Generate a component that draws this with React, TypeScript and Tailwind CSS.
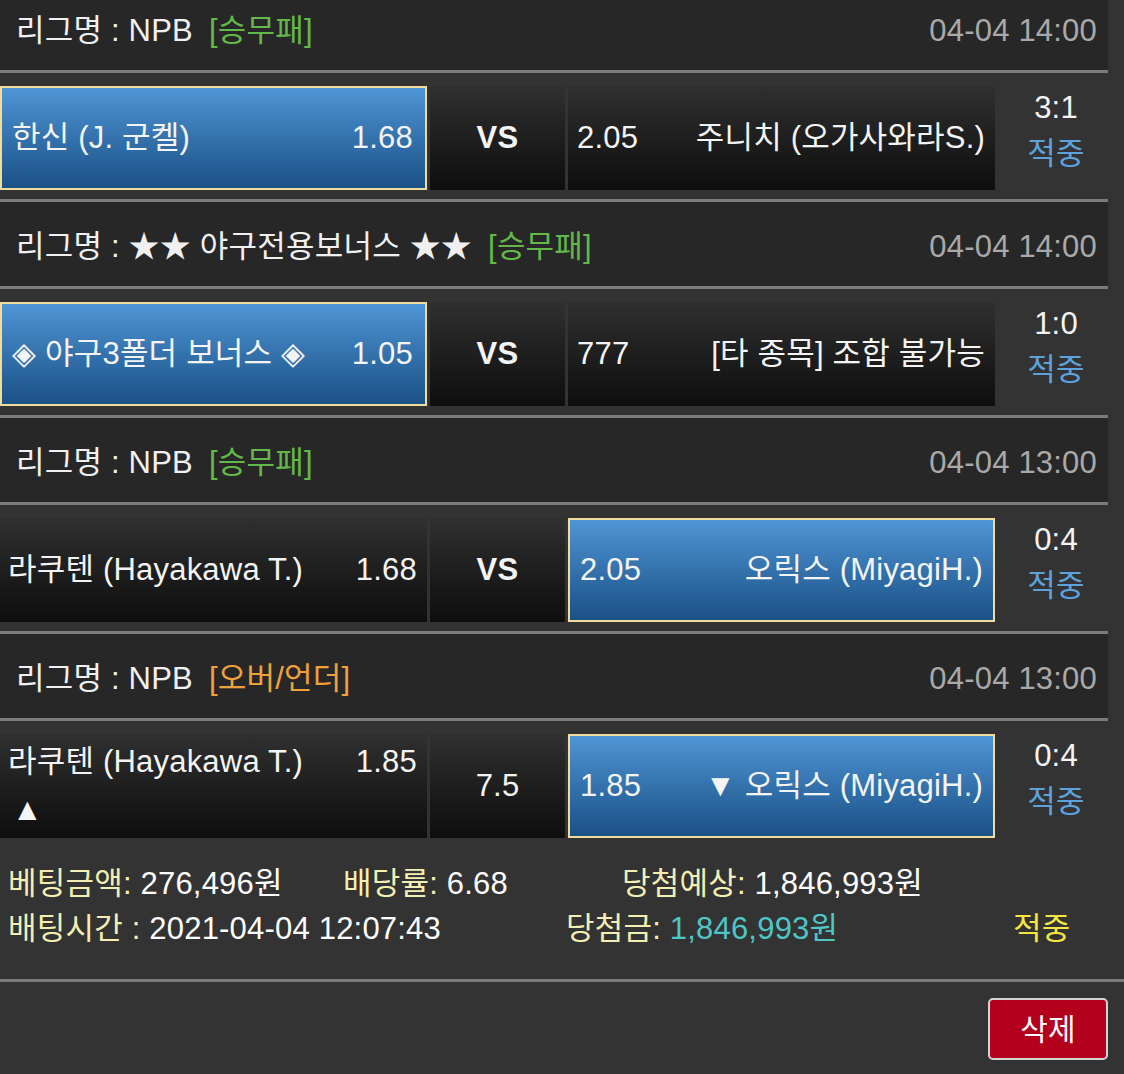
import React from 'react';
import clsx from 'clsx';

interface Game {
  league: string;
  tag: string;
  tagClass: string;
  date: string;
  home: string;
  homeOdds: string;
  homeSub?: string;
  mid: string;
  awayOdds: string;
  away: string;
  pick: 'home' | 'away';
  score: string;
}

const games: Game[] = [
  {
    league: 'NPB',
    tag: '[승무패]',
    tagClass: 'text-[#62b849]',
    date: '04-04 14:00',
    home: '한신 (J. 군켈)',
    homeOdds: '1.68',
    mid: 'VS',
    awayOdds: '2.05',
    away: '주니치 (오가사와라S.)',
    pick: 'home',
    score: '3:1',
  },
  {
    league: '★★ 야구전용보너스 ★★',
    tag: '[승무패]',
    tagClass: 'text-[#62b849]',
    date: '04-04 14:00',
    home: '◈ 야구3폴더 보너스 ◈',
    homeOdds: '1.05',
    mid: 'VS',
    awayOdds: '777',
    away: '[타 종목] 조합 불가능',
    pick: 'home',
    score: '1:0',
  },
  {
    league: 'NPB',
    tag: '[승무패]',
    tagClass: 'text-[#62b849]',
    date: '04-04 13:00',
    home: '라쿠텐 (Hayakawa T.)',
    homeOdds: '1.68',
    mid: 'VS',
    awayOdds: '2.05',
    away: '오릭스 (MiyagiH.)',
    pick: 'away',
    score: '0:4',
  },
  {
    league: 'NPB',
    tag: '[오버/언더]',
    tagClass: 'text-[#f0a13c]',
    date: '04-04 13:00',
    home: '라쿠텐 (Hayakawa T.)',
    homeOdds: '1.85',
    homeSub: '▲',
    mid: '7.5',
    awayOdds: '1.85',
    away: '▼ 오릭스 (MiyagiH.)',
    pick: 'away',
    score: '0:4',
  },
];

const dark = 'bg-linear-to-b from-[#303030] to-[#0e0e0e]';
const blue = 'bg-linear-to-b from-[#4f95d5] to-[#1a5186] border-2 border-[#f0dc9c]';

const GameBlock: React.FC<{ game: Game }> = ({ game }) => {
  const homeSel = game.pick === 'home';
  const awaySel = game.pick === 'away';

  return (
    <div>
      <div className="w-[1108px] border-y-[3px] border-[#7b7b7b] bg-[#272727] h-[90px] flex items-center justify-between pl-4 pr-[11px] pt-[7px]">
        <div className="text-[#f0f0f0]">
          리그명 : {game.league}
          <span className={clsx('ml-4', game.tagClass)}>{game.tag}</span>
        </div>
        <div className="text-[#a9a9a9]">{game.date}</div>
      </div>

      <div className="mt-[13px] mb-[9px] flex h-[104px] w-[1108px] gap-[3px] text-[#f4f4f4]">
        <div
          className={clsx(
            'w-[427px] flex flex-col justify-center',
            homeSel ? blue + ' pl-[10px] pr-[12px]' : dark + ' pl-2 pr-[10px]'
          )}
        >
          <div className="flex items-center justify-between leading-[48px]">
            <span>{game.home}</span>
            <span>{game.homeOdds}</span>
          </div>
          {game.homeSub && <div className="leading-[48px] pl-1">{game.homeSub}</div>}
        </div>

        <div className={clsx('w-[135px] flex items-center justify-center', dark)}>
          <span className={game.mid === 'VS' ? 'font-bold' : ''}>{game.mid}</span>
        </div>

        <div
          className={clsx(
            'w-[427px] flex items-center justify-between',
            awaySel ? blue + ' px-[10px]' : dark + ' pl-[9px] pr-[10px]'
          )}
        >
          <span>{game.awayOdds}</span>
          <span>{game.away}</span>
        </div>

        <div className="flex-1 flex flex-col items-center justify-center pl-[6px] pb-[14px] leading-[46px]">
          <span>{game.score}</span>
          <span className="text-[#5ea2dc]">적중</span>
        </div>
      </div>
    </div>
  );
};

export default function App() {
  return (
    <div className="min-h-screen overflow-hidden bg-[#333333] text-[31px] tracking-[0.2px] font-['Liberation_Sans','Noto_Sans_CJK_KR',sans-serif]">
      <div className="-mt-[17px]">
        {games.map((g, i) => (
          <GameBlock key={i} game={g} />
        ))}
      </div>

      <div className="pt-[14px] pb-[28px] leading-[45px]">
        <div className="flex pl-2">
          <span className="w-[335px]">
            <span className="text-[#f3efb2]">베팅금액: </span>
            <span className="text-white">276,496원</span>
          </span>
          <span className="w-[279px]">
            <span className="text-[#f3efb2]">배당률: </span>
            <span className="text-white">6.68</span>
          </span>
          <span>
            <span className="text-[#f3efb2]">당첨예상: </span>
            <span className="text-white">1,846,993원</span>
          </span>
        </div>
        <div className="flex pl-2">
          <span className="w-[558px]">
            <span className="text-[#f3efb2]">배팅시간 : </span>
            <span className="text-white">2021-04-04 12:07:43</span>
          </span>
          <span className="w-[447px]">
            <span className="text-[#f3efb2]">당첨금: </span>
            <span className="text-[#4ec6c6]">1,846,993원</span>
          </span>
          <span className="text-[#f5e642]">적중</span>
        </div>
      </div>

      <div className="border-t-[3px] border-[#7b7b7b]" />

      <div className="flex justify-end pr-4 pt-4">
        <button className="h-[62px] w-[120px] rounded-[5px] border-2 border-[#d4d4d4] bg-[#b3001d] text-[30px] text-white">
          삭제
        </button>
      </div>
    </div>
  );
}
